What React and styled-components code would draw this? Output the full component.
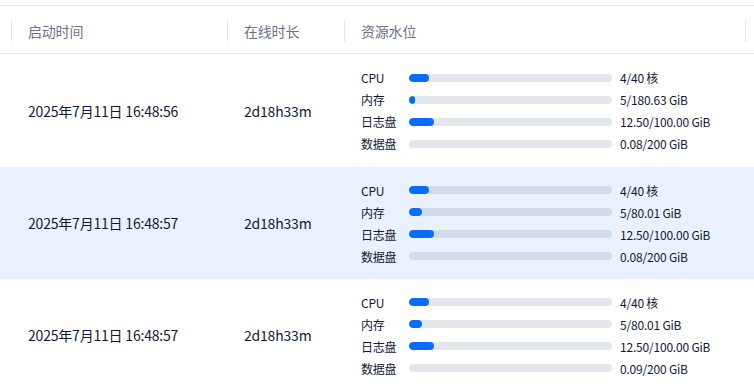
import React from "react";
import styled, { createGlobalStyle } from "styled-components";

const Global = createGlobalStyle`
  html, body { margin: 0; padding: 0; background: #fff; }
  body { font-family: "Noto Sans CJK SC", "Noto Sans", sans-serif; color: #0f1933; letter-spacing: -0.2px; }
`;

const Table = styled.div`
  padding-top: 5px;
`;

const Grid = styled.div`
  display: grid;
  grid-template-columns: 11px 216px 117px 401px 1fr;
  border-top: 1px solid #e4e7ee;
`;

const HeadCell = styled.div`
  height: 48px;
  display: flex;
  align-items: center;
  position: relative;
  padding-left: 17px;
  padding-top: 2px;
  box-sizing: border-box;
  font-size: 14px;
  color: #6b7385;
  border-bottom: 1px solid #e4e7ee;
  &::before {
    content: "";
    display: ${(p) => (p.$divider ? "block" : "none")};
    position: absolute;
    left: 0;
    top: 14px;
    width: 1px;
    height: 22px;
    background: #e4e7ee;
  }
`;

const Row = styled.div`
  display: contents;
  & > div { background: ${(p) => (p.$active ? "#eaf1fe" : "#fff")}; }
`;

const Cell = styled.div`
  display: flex;
  align-items: center;
  padding-left: 17px;
  font-size: 14px;
  height: ${(p) => p.$h}px;
`;

const Spacer = styled.div``;

const Resources = styled.div`
  display: grid;
  grid-template-columns: 40px 203px auto;
  column-gap: 8px;
  grid-auto-rows: 22px;
  align-items: center;
  padding-left: 17px;
  align-content: center;
  font-size: 12px;
`;

const Track = styled.div`
  height: 8px;
  border-radius: 4px;
  background: ${(p) => (p.$active ? "#d3dbea" : "#e3e6eb")};
  overflow: hidden;
`;

const Fill = styled.div`
  height: 100%;
  border-radius: 4px;
  background: #0a6cff;
`;

const rows = [
  { date: "2025年7月11日 16:48:56", dur: "2d18h33m", h: 113, res: [
    ["CPU", 4, 40, "4/40 核"], ["内存", 5, 180.63, "5/180.63 GiB"],
    ["日志盘", 12.5, 100, "12.50/100.00 GiB"], ["数据盘", 0.08, 200, "0.08/200 GiB"] ] },
  { date: "2025年7月11日 16:48:57", dur: "2d18h33m", h: 112, active: true, res: [
    ["CPU", 4, 40, "4/40 核"], ["内存", 5, 80.01, "5/80.01 GiB"],
    ["日志盘", 12.5, 100, "12.50/100.00 GiB"], ["数据盘", 0.08, 200, "0.08/200 GiB"] ] },
  { date: "2025年7月11日 16:48:57", dur: "2d18h33m", h: 112, res: [
    ["CPU", 4, 40, "4/40 核"], ["内存", 5, 80.01, "5/80.01 GiB"],
    ["日志盘", 12.5, 100, "12.50/100.00 GiB"], ["数据盘", 0.09, 200, "0.09/200 GiB"] ] },
];

export default function App() {
  return (
    <>
      <Global />
      <Table>
        <Grid>
          <HeadCell />
          <HeadCell $divider>启动时间</HeadCell>
          <HeadCell $divider>在线时长</HeadCell>
          <HeadCell $divider>资源水位</HeadCell>
          <HeadCell $divider />
          {rows.map((r, i) => (
            <Row key={i} $active={r.active}>
              <Spacer />
              <Cell $h={r.h}>{r.date}</Cell>
              <Cell $h={r.h}>{r.dur}</Cell>
              <Resources>
                {r.res.map(([label, used, total, text]) => {
                  const pct = (used / total) * 100;
                  const w = pct < 0.5 ? 0 : Math.max(pct, 2.5);
                  return (
                    <React.Fragment key={label}>
                      <span>{label}</span>
                      <Track $active={r.active}>
                        <Fill style={{ width: `${w}%` }} />
                      </Track>
                      <span>{text}</span>
                    </React.Fragment>
                  );
                })}
              </Resources>
              <Spacer />
            </Row>
          ))}
        </Grid>
      </Table>
    </>
  );
}
